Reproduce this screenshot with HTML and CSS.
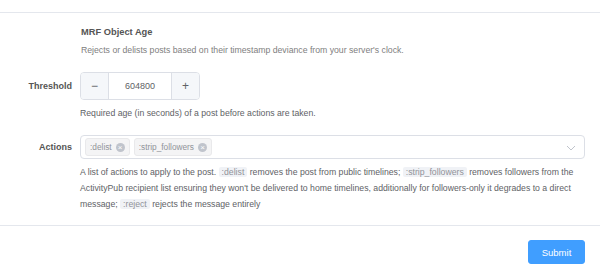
FILE: index.html
```html
<!DOCTYPE html>
<html lang="en">
<head>
    <meta charset="UTF-8">
    <meta name="viewport" content="width=device-width, initial-scale=1.0">
    <title>MRF Object Age</title>
    <link rel="stylesheet" href="styles.css">
</head>
<body>
    <div class="divider top-divider"></div>

    <!-- Policy header -->
    <div class="section-head">
        <div class="section-title">MRF Object Age</div>
        <div class="section-desc">Rejects or delists posts based on their timestamp deviance from your server's clock.</div>
    </div>

    <!-- Threshold -->
    <div class="form-item">
        <label class="form-label">Threshold</label>
        <div class="form-content">
            <div class="input-number">
                <span class="num-btn minus">&minus;</span>
                <span class="num-value">604800</span>
                <span class="num-btn plus">+</span>
            </div>
            <div class="help">Required age (in seconds) of a post before actions are taken.</div>
        </div>
    </div>

    <!-- Actions -->
    <div class="form-item actions-item">
        <label class="form-label">Actions</label>
        <div class="form-content">
            <div class="select">
                <span class="tag">:delist <span class="tag-close">&times;</span></span>
                <span class="tag">:strip_followers <span class="tag-close">&times;</span></span>
                <svg class="arrow" width="10" height="6" viewBox="0 0 10 6"><path d="M1 1 L5 5 L9 1" fill="none" stroke="#c0c4cc" stroke-width="1"/></svg>
            </div>
            <div class="help long-help">A list of actions to apply to the post. <code>:delist</code> removes the post from public timelines; <code>:strip_followers</code> removes followers from the ActivityPub recipient list ensuring they won't be delivered to home timelines, additionally for followers-only it degrades to a direct message; <code>:reject</code> rejects the message entirely</div>
        </div>
    </div>

    <div class="divider bottom-divider"></div>

    <div class="submit-row">
        <button class="btn-primary">Submit</button>
    </div>
</body>
</html>
```

FILE: styles.css
```css
body {
    margin: 0;
    background: #fff;
    font-family: "Liberation Sans", Arial, sans-serif;
    color: #606266;
}
.divider {
    height: 1px;
    background: #e4e7ed;
}
.top-divider {
    margin-top: 12px;
}
.section-head {
    padding: 12px 0 0 81px;
}
.section-title {
    font-size: 9.3px;
    font-weight: bold;
    color: #555;
    line-height: 14px;
}
.section-desc {
    font-size: 8.7px;
    color: #808080;
    margin-top: 4px;
    line-height: 14px;
}
.form-item {
    display: flex;
    margin-top: 15px;
    padding-right: 15px;
}
.form-label {
    flex-shrink: 0;
    width: 80px;
    padding-right: 8px;
    box-sizing: border-box;
    text-align: right;
    font-size: 9px;
    font-weight: bold;
    color: #555;
    line-height: 28px;
}
.form-content {
    flex: 1;
}
.input-number {
    display: flex;
    width: 120px;
    height: 28px;
    border: 1px solid #dcdfe6;
    border-radius: 4px;
    box-sizing: border-box;
    overflow: hidden;
}
.num-btn {
    width: 27px;
    background: #f5f7fa;
    color: #606266;
    font-size: 12px;
    display: flex;
    align-items: center;
    justify-content: center;
}
.minus {
    border-right: 1px solid #dcdfe6;
}
.plus {
    border-left: 1px solid #dcdfe6;
}
.num-value {
    flex: 1;
    text-align: center;
    font-size: 9px;
    line-height: 26px;
    color: #606266;
}
.help {
    font-size: 8.7px;
    color: #606266;
    line-height: 16px;
    margin-top: 5px;
}
.actions-item {
    margin-top: 14px;
}
.actions-item .form-label {
    line-height: 24px;
}
.select {
    position: relative;
    display: flex;
    align-items: center;
    gap: 4px;
    height: 24px;
    border: 1px solid #dcdfe6;
    border-radius: 4px;
    box-sizing: border-box;
    padding-left: 4px;
}
.tag {
    display: inline-flex;
    align-items: center;
    gap: 4px;
    height: 16px;
    padding: 0 4px;
    background: #f4f4f5;
    border: 1px solid #e9e9eb;
    border-radius: 3px;
    font-size: 8.3px;
    color: #909399;
}
.tag-close {
    display: inline-flex;
    align-items: center;
    justify-content: center;
    width: 9px;
    height: 9px;
    border-radius: 50%;
    background: #c0c4cc;
    color: #fff;
    font-size: 8px;
    line-height: 9px;
}
.arrow {
    position: absolute;
    right: 8px;
    top: 9px;
}
.long-help {
    margin-top: 5px;
}
code {
    font-family: "Liberation Sans", Arial, sans-serif;
    background: #f0f2f6;
    color: #909399;
    padding: 0 3px;
    border-radius: 2px;
}
.bottom-divider {
    margin-top: 13px;
}
.submit-row {
    display: flex;
    justify-content: flex-end;
    padding: 14px 15px 0 0;
}
.btn-primary {
    width: 57px;
    height: 24px;
    background: #409eff;
    border: 1px solid #409eff;
    border-radius: 3px;
    color: #fff;
    font-family: "Liberation Sans", Arial, sans-serif;
    font-size: 9.5px;
}
```
